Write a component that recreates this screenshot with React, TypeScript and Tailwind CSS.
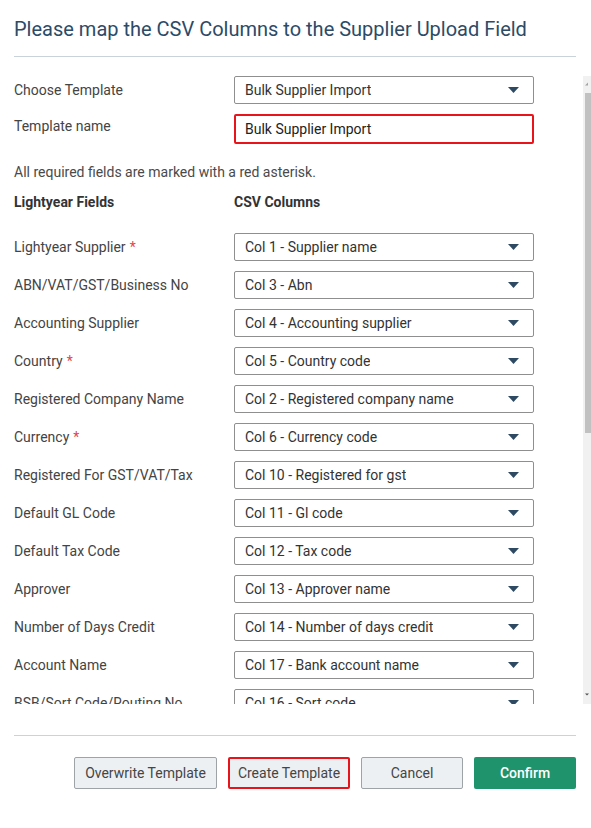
import React from 'react';

type Row = { label: string; required?: boolean; value: string };

const rows: Row[] = [
  { label: 'Lightyear Supplier', required: true, value: 'Col 1 - Supplier name' },
  { label: 'ABN/VAT/GST/Business No', value: 'Col 3 - Abn' },
  { label: 'Accounting Supplier', value: 'Col 4 - Accounting supplier' },
  { label: 'Country', required: true, value: 'Col 5 - Country code' },
  { label: 'Registered Company Name', value: 'Col 2 - Registered company name' },
  { label: 'Currency', required: true, value: 'Col 6 - Currency code' },
  { label: 'Registered For GST/VAT/Tax', value: 'Col 10 - Registered for gst' },
  { label: 'Default GL Code', value: 'Col 11 - Gl code' },
  { label: 'Default Tax Code', value: 'Col 12 - Tax code' },
  { label: 'Approver', value: 'Col 13 - Approver name' },
  { label: 'Number of Days Credit', value: 'Col 14 - Number of days credit' },
  { label: 'Account Name', value: 'Col 17 - Bank account name' },
  { label: 'BSB/Sort Code/Routing No', value: 'Col 16 - Sort code' },
  { label: 'Account Number', value: 'Col 15 - Bank account number' },
  { label: 'Email', value: 'Col 7 - Email' },
];

const Caret = () => (
  <svg width="11" height="6" viewBox="0 0 11 6" className="shrink-0">
    <path d="M0 0h11L5.5 6z" fill="#2e4a63" />
  </svg>
);

const Select: React.FC<{ value: string }> = ({ value }) => (
  <div className="w-[300px] h-[28px] shrink-0 border border-[#8f8f8f] rounded-[2px] bg-white flex items-center justify-between pl-[10px] pr-[14px]">
    <span className="text-[14px] text-[#333333] truncate">{value}</span>
    <Caret />
  </div>
);

const Btn: React.FC<{ children: React.ReactNode; className?: string }> = ({ children, className = '' }) => (
  <button className={`h-[32px] shrink-0 whitespace-nowrap rounded-[2px] border border-[#9ea3a8] bg-[#edf0f3] text-[14px] text-[#454545] ${className}`}>
    {children}
  </button>
);

export default function App() {
  return (
    <div className="w-[591px] h-[828px] bg-white overflow-hidden font-['Roboto','Liberation_Sans',sans-serif] flex flex-col">
      {/* Header */}
      <div className="px-[14px] pt-[15px]">
        <h1 className="text-[20px] leading-[28px] text-[#2c4b67] font-normal">
          Please map the CSV Columns to the Supplier Upload Field
        </h1>
        <div className="w-[562px] h-px bg-[#c9d3da] mt-[13px]" />
      </div>

      {/* Scroll area */}
      <div className="flex mt-[19px] h-[628px]">
        <div className="flex-1 overflow-hidden pl-[14px]">
          <div className="flex items-center h-[28px]">
            <span className="w-[220px] text-[14px] text-[#444444]">Choose Template</span>
            <Select value="Bulk Supplier Import" />
          </div>
          <div className="flex items-center h-[30px] mt-[10px]">
            <span className="w-[220px] text-[14px] text-[#444444] -mt-[5px]">Template name</span>
            <div className="w-[300px] h-[30px] border-2 border-[#e8141b] rounded-[2px] flex items-center pl-[9px]">
              <span className="text-[14px] text-[#222222]">Bulk Supplier Import</span>
            </div>
          </div>
          <p className="mt-[18px] text-[14px] leading-[20px] text-[#4a4a4a]">
            All required fields are marked with a red asterisk.
          </p>
          <div className="flex mt-[10px] leading-[20px] text-[14px] font-bold text-[#333333]">
            <span className="w-[220px]">Lightyear Fields</span>
            <span>CSV Columns</span>
          </div>
          <div className="flex flex-col gap-[10px] mt-[21px]">
            {rows.map((r) => (
              <div key={r.label} className="flex items-center h-[28px]">
                <span className="w-[220px] text-[14px] text-[#444444]">
                  {r.label}
                  {r.required && <span className="text-[#e5434b] ml-[4px]">*</span>}
                </span>
                <Select value={r.value} />
              </div>
            ))}
          </div>
        </div>

        {/* Scrollbar */}
        <div className="w-[8px] h-full bg-[#f1f1f1] flex flex-col items-start">
          <svg width="8" height="17" viewBox="0 0 8 17" className="shrink-0">
            <path d="M2 9.5l3-3 0 3z" fill="#a3a3a3" />
          </svg>
          <div className="w-[8px] h-[340px] bg-[#c1c1c1] ml-[2px]" />
          <div className="flex-1" />
          <svg width="8" height="17" viewBox="0 0 8 17" className="shrink-0">
            <path d="M2 6.5l4 0-2 2z" fill="#505050" />
          </svg>
        </div>
      </div>

      {/* Footer */}
      <div className="px-[14px] mt-[31px]">
        <div className="w-[562px] h-px bg-[#c9d3da]" />
        <div className="w-[562px] flex justify-end gap-[11px] mt-[21px]">
          <Btn className="w-[143px]">Overwrite Template</Btn>
          <Btn className="w-[122px] border-2 border-[#e8141b]">Create Template</Btn>
          <Btn className="w-[102px]">Cancel</Btn>
          <button className="w-[102px] h-[32px] shrink-0 rounded-[2px] bg-[#1f936b] text-white text-[14px] font-medium">
            Confirm
          </button>
        </div>
      </div>
    </div>
  );
}
